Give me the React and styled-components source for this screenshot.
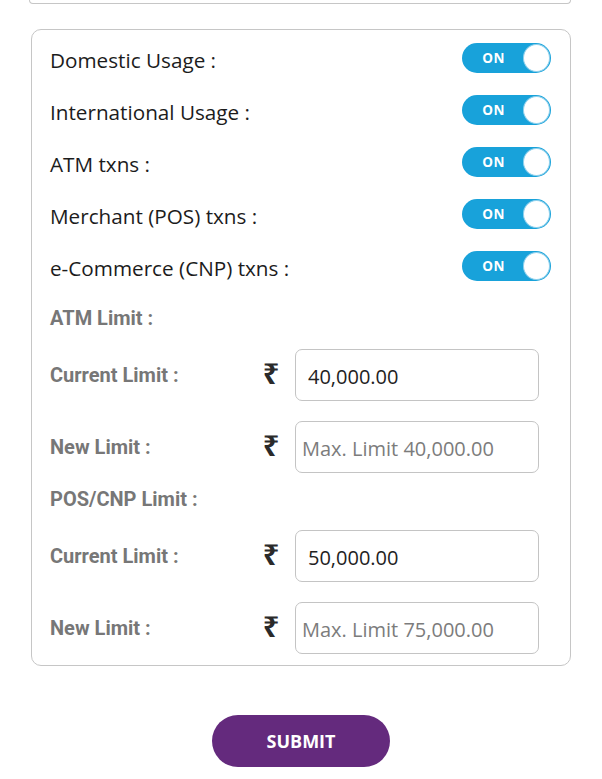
import React from "react";
import styled, { createGlobalStyle } from "styled-components";

const GlobalStyle = createGlobalStyle`
  html, body {
    margin: 0;
    padding: 0;
    background: #ffffff;
  }
  body {
    font-family: "Open Sans", "Noto Sans", sans-serif;
    color: #222;
  }
`;

const Page = styled.div`
  width: 602px;
  min-height: 779px;
  display: flex;
  flex-direction: column;
  align-items: center;
  box-sizing: border-box;
`;

const PrevCardEdge = styled.div`
  width: 542px;
  height: 4px;
  box-sizing: border-box;
  border: 1.5px solid #c6c6c6;
  border-top: none;
  border-radius: 0 0 10px 10px;
  margin-left: -3px;
`;

const Card = styled.section`
  width: 540px;
  box-sizing: border-box;
  margin-top: 25px;
  border: 1.5px solid #c6c6c6;
  border-radius: 10px;
  padding: 2px 19px 11px 18px;
  display: flex;
  flex-direction: column;
`;

const ToggleRow = styled.div`
  height: 52px;
  display: flex;
  align-items: center;
  justify-content: space-between;
`;

const ToggleLabel = styled.span`
  font-family: "Open Sans", sans-serif;
  font-size: 20.7px;
  color: #1c1c1c;
  padding-top: 3px;
`;

const Switch = styled.button`
  width: 89px;
  height: 30px;
  border: none;
  border-radius: 15px;
  background: #18a2da;
  padding: 0 1px 0 0;
  display: flex;
  align-items: center;
  justify-content: space-between;
  cursor: pointer;
`;

const SwitchText = styled.span`
  font-family: "Open Sans", sans-serif;
  font-weight: 700;
  font-size: 13.5px;
  letter-spacing: 0.5px;
  color: #fff;
  width: 62px;
  text-align: center;
  margin-left: 2px;
`;

const Knob = styled.span`
  width: 28px;
  height: 28px;
  border-radius: 50%;
  background: #fff;
  box-sizing: border-box;
  border: 1px solid #8fd0ec;
`;

const SectionHeading = styled.div`
  height: 44px;
  margin-top: ${(p) => p.$top}px;
  margin-bottom: 9px;
  display: flex;
  align-items: center;
  font-family: Roboto, "Noto Sans", sans-serif;
  font-weight: 700;
  font-size: 20px;
  color: #777;
`;

const LimitList = styled.div`
  display: flex;
  flex-direction: column;
  gap: 20px;
  margin-right: 12px;
`;

const LimitRow = styled.div`
  display: grid;
  grid-template-columns: 1fr 24px 244px;
  column-gap: 12px;
  align-items: center;
  height: 52px;
`;

const LimitLabel = styled.span`
  font-family: Roboto, "Noto Sans", sans-serif;
  font-weight: 700;
  font-size: 20px;
  color: #777;
  margin-top: -1px;
`;

const Rupee = styled.span`
  font-family: "Noto Sans", "DejaVu Sans", sans-serif;
  font-weight: 700;
  font-size: 29px;
  line-height: 1;
  color: #2a2a2a;
  text-align: center;
  margin-top: -6px;
`;

const AmountInput = styled.input`
  width: 244px;
  height: 52px;
  box-sizing: border-box;
  border: 1.5px solid #c4c4c4;
  border-radius: 7px;
  padding: 2px 0 0 ${(p) => (p.$filled ? 12 : 6)}px;
  font-family: "Open Sans", sans-serif;
  font-size: 20px;
  color: #222;
  background: #fff;
  outline: none;

  &::placeholder {
    color: #7c7c7c;
  }
`;

const SubmitButton = styled.button`
  margin-top: 49px;
  width: 178px;
  height: 52px;
  border: none;
  border-radius: 26px;
  background: #642a7d;
  color: #fff;
  font-family: "Open Sans", sans-serif;
  font-weight: 700;
  font-size: 18px;
  cursor: pointer;
`;

const toggles = [
  "Domestic Usage :",
  "International Usage :",
  "ATM txns :",
  "Merchant (POS) txns :",
  "e-Commerce (CNP) txns :",
];

const limits = [
  { title: "ATM Limit :", top: 4, current: "40,000.00", max: "Max. Limit 40,000.00" },
  { title: "POS/CNP Limit :", top: 4, current: "50,000.00", max: "Max. Limit 75,000.00" },
];

function Toggle() {
  return (
    <Switch type="button" aria-pressed="true">
      <SwitchText>ON</SwitchText>
      <Knob />
    </Switch>
  );
}

export default function App() {
  return (
    <>
      <GlobalStyle />
      <Page>
        <PrevCardEdge />
        <Card>
          {toggles.map((t) => (
            <ToggleRow key={t}>
              <ToggleLabel>{t}</ToggleLabel>
              <Toggle />
            </ToggleRow>
          ))}
          {limits.map((l) => (
            <React.Fragment key={l.title}>
              <SectionHeading $top={l.top}>{l.title}</SectionHeading>
              <LimitList>
                <LimitRow>
                  <LimitLabel>Current Limit :</LimitLabel>
                  <Rupee>₹</Rupee>
                  <AmountInput $filled defaultValue={l.current} readOnly />
                </LimitRow>
                <LimitRow>
                  <LimitLabel>New Limit :</LimitLabel>
                  <Rupee>₹</Rupee>
                  <AmountInput placeholder={l.max} />
                </LimitRow>
              </LimitList>
            </React.Fragment>
          ))}
        </Card>
        <SubmitButton type="button">SUBMIT</SubmitButton>
      </Page>
    </>
  );
}
